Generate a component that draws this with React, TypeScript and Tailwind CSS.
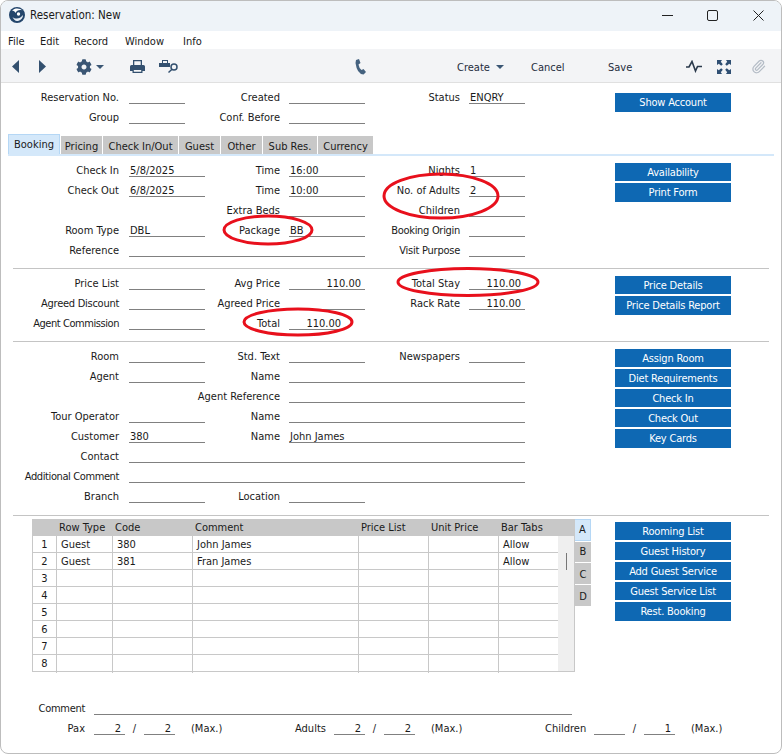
import type { ReactNode } from "react"
import { FaCog } from "react-icons/fa"
import { Paperclip } from "lucide-react"

const font = { fontFamily: '"DejaVu Sans Condensed", "DejaVu Sans", sans-serif' }

function F({ children, className = "", right }: { children?: ReactNode; className?: string; right?: boolean }) {
  return (
    <div className={`h-[17px] leading-[22px] border-b border-[#808080] whitespace-nowrap ${right ? "text-right pr-1" : "pl-px"} ${className}`}>
      {children}
    </div>
  )
}

// labels are right aligned and spill to the left when they are wider than their column
function L1({ children, className = "" }: { children?: ReactNode; className?: string }) {
  return <div className={`flex justify-end whitespace-nowrap leading-[22px] pr-2.5 ${className}`}>{children}</div>
}
function L2({ children, className = "" }: { children?: ReactNode; className?: string }) {
  return <div className={`flex justify-end whitespace-nowrap leading-[22px] pr-[9px] ${className}`}>{children}</div>
}

function Buttons({ items, className = "mt-[3px]" }: { items: string[]; className?: string }) {
  return (
    <div className={`w-[116px] flex flex-col gap-[2px] ${className}`}>
      {items.map((b) => (
        <div key={b} className="h-[18px] last:h-[19px] bg-[#0e68b3] text-white text-center leading-5 tracking-[-0.2px] whitespace-nowrap">
          {b}
        </div>
      ))}
    </div>
  )
}

function FormGrid({ children }: { children: ReactNode }) {
  return (
    <div className="w-[615px] shrink-0 grid grid-cols-[129px_76px_84px_76px_104px_56px] auto-rows-[20px] content-start">
      {children}
    </div>
  )
}

function Divider({ className = "" }: { className?: string }) {
  return <div className={`h-px bg-[#c4c4c4] mx-3 ${className}`} />
}

const tabs = [
  ["Pricing", "w-[41px]"],
  ["Check In/Out", "w-[75px]"],
  ["Guest", "w-[41px]"],
  ["Other", "w-[41px]"],
  ["Sub Res.", "w-[54px]"],
  ["Currency", "w-[55px]"],
]

const rows = [
  ["1", "Guest", "380", "John James", "Allow"],
  ["2", "Guest", "381", "Fran James", "Allow"],
  ["3", "", "", "", ""],
  ["4", "", "", "", ""],
  ["5", "", "", "", ""],
  ["6", "", "", "", ""],
  ["7", "", "", "", ""],
  ["8", "", "", "", ""],
]

function Logo() {
  return (
    <svg width="16" height="16" viewBox="0 0 16 16">
      <circle cx="8" cy="8" r="8" fill="#24466c" />
      <path d="M3 3.500 C6 0.500 11 1 13.500 3.500 C10.500 2.500 7.500 3.500 6.500 6 C6 4.500 4.500 3.800 3 3.500Z" fill="#fff" />
      <path d="M3.500 10 C6.500 12.500 11 12 14 8 C14 11.500 11 14 8 14 C6 14 4.500 12 3.500 10Z" fill="#e8eef5" />
      <circle cx="9.500" cy="7" r="1.700" fill="#fff" />
    </svg>
  )
}

function Caret() {
  return (
    <svg width="8" height="4" viewBox="0 0 8 4" className="shrink-0 fill-[#3b5674]">
      <path d="M0 0H8L4 4Z" />
    </svg>
  )
}

function Toolbar() {
  return (
    <div className="h-[34px] pt-0.5 bg-[#f3f4f6] border-b border-[#e0e0e0] flex items-center text-[#1f2d3d] shrink-0">
      <svg width="7" height="13" viewBox="0 0 7 13" className="ml-[11px] shrink-0 fill-[#33506f]"><path d="M7 0V13L0 6.500Z" /></svg>
      <svg width="7" height="13" viewBox="0 0 7 13" className="ml-[20px] shrink-0 fill-[#33506f]"><path d="M0 0V13L7 6.500Z" /></svg>
      <FaCog className="ml-[30px] shrink-0 text-[#3b5674]" size={16} />
      <div className="ml-1"><Caret /></div>
      <svg width="15" height="13" viewBox="0 0 15 13" className="ml-[26px] shrink-0 fill-[#33506f]">
        <path fillRule="evenodd" d="M3 0H12V5H13.500Q15 5 15 6.500V11H12.500V13H2.500V11H0V6.500Q0 5 1.500 5H3ZM4.300 1.300V5H10.700V1.300ZM3.800 10V11.700H11.200V10Z" />
      </svg>
      <svg width="20" height="15" viewBox="0 0 20 15" className="ml-[14px] shrink-0">
        <path fillRule="evenodd" d="M3 1H9V4H11V8H0V4H3ZM4 2V4H8V2Z" fill="#33506f" />
        <circle cx="15" cy="8" r="3" fill="none" stroke="#33506f" strokeWidth="1.500" />
        <path d="M13 10.200L9.500 13.500" stroke="#33506f" strokeWidth="1.500" />
      </svg>
      <svg width="11" height="16" viewBox="0 0 11 16" className="ml-[176px] shrink-0 fill-[#45627f]">
        <path d="M1 1L4 0L5.500 4L3.500 5.500Q4 9 6.500 11L8.500 10L11 13L8.500 15.500Q2 15 0.500 4Z" />
      </svg>
      <span className="ml-[91px] w-[39px] pt-1 shrink-0">Create</span>
      <Caret />
      <span className="ml-[27px] w-[77px] pt-1 shrink-0">Cancel</span>
      <span className="w-[78px] pt-1 shrink-0">Save</span>
      <svg width="16" height="13" viewBox="0 0 16 13" className="shrink-0">
        <path d="M0 7H3L6 1.500L9.500 11L11.500 6.500H16" fill="none" stroke="#2b3a4c" strokeWidth="1.600" />
      </svg>
      <svg width="14" height="14" viewBox="0 0 14 14" className="ml-[15px] shrink-0 fill-[#2f4f73]">
        <path d="M0 0H5L3.800 1.800L5.800 4.200L4.200 5.800L1.800 3.800L0 5Z" />
        <path d="M14 0H9L10.200 1.800L8.200 4.200L9.800 5.800L12.200 3.800L14 5Z" />
        <path d="M0 14H5L3.800 12.200L5.800 9.800L4.200 8.200L1.800 10.200L0 9Z" />
        <path d="M14 14H9L10.200 12.200L8.200 9.800L9.800 8.200L12.200 10.200L14 9Z" />
      </svg>
      <Paperclip className="ml-5 shrink-0 text-[#b4bcc6]" size={15} />
    </div>
  )
}

export default function App() {
  return (
    <div style={font} className="relative w-[782px] h-[754px] bg-white text-[11px] text-[#1a1a1a] overflow-hidden">
      <div className="w-full h-full flex flex-col border border-[#bdbdbd] rounded-lg overflow-hidden">
        {/* title bar */}
        <div className="h-[30px] bg-[#eef3f8] flex items-center shrink-0">
          <div className="ml-2 -mt-0.5 flex"><Logo /></div>
          <span className="ml-[5px] text-[11.5px]">Reservation: New</span>
          <svg width="11" height="11" viewBox="0 0 11 11" className="ml-auto -mt-0.5"><path d="M0 5.500H11" stroke="#222" strokeWidth="1" /></svg>
          <svg width="11" height="11" viewBox="0 0 11 11" className="ml-[34px] -mt-0.5"><rect x="0.500" y="0.500" width="10" height="10" rx="1.500" fill="none" stroke="#222" /></svg>
          <svg width="11" height="11" viewBox="0 0 11 11" className="ml-[35px] mr-[17px] -mt-0.5"><path d="M0.500 0.500L10.500 10.500M10.500 0.500L0.500 10.500" stroke="#222" /></svg>
        </div>
        {/* menu */}
        <div className="h-[18px] pt-1 flex items-center shrink-0 pl-[7px]">
          <span className="w-8">File</span>
          <span className="w-[34px]">Edit</span>
          <span className="w-[51px]">Record</span>
          <span className="w-[58px]">Window</span>
          <span>Info</span>
        </div>
        <Toolbar />

        <div className="flex-1 flex flex-col">
          <div className="flex mt-1 -ml-px">
            <FormGrid>
              <L1>Reservation No.</L1><F className="w-14" /><L2>Created</L2><F /><L2>Status</L2><F>ENQRY</F>
              <L1>Group</L1><F className="w-14" /><L2>Conf. Before</L2><F />
            </FormGrid>
            <Buttons items={["Show Account"]} className="mt-1.5" />
          </div>

          {/* tabs */}
          <div className="mt-[7px] h-[22px] mx-[7px] border-b-2 border-[#d4e8fa] flex items-end gap-px shrink-0">
            <div className="w-[52px] h-5 bg-[#d4e8fa] border border-[#b5d7f5] border-b-0 text-center leading-[19px]">Booking</div>
            {tabs.map(([t, w]) => (
              <div key={t} className={`${w} h-[18px] bg-[#c8c8c8] text-center leading-[22px] whitespace-nowrap`}>{t}</div>
            ))}
          </div>

          <div className="flex mt-1 -ml-px">
            <FormGrid>
              <L1>Check In</L1><F>5/8/2025</F><L2>Time</L2><F>16:00</F><L2>Nights</L2><F>1</F>
              <L1>Check Out</L1><F>6/8/2025</F><L2>Time</L2><F>10:00</F><L2>No. of Adults</L2><F>2</F>
              <L2 className="col-start-3">Extra Beds</L2><F /><L2>Children</L2><F />
              <L1>Room Type</L1><F>DBL</F><L2>Package</L2><F>BB</F><L2 className="tracking-[-0.3px]">Booking Origin</L2><F />
              <L1>Reference</L1><F className="col-span-3" /><L2 className="tracking-[-0.25px]">Visit Purpose</L2><F />
            </FormGrid>
            <Buttons items={["Availability", "Print Form"]} />
          </div>
          <Divider className="mt-2" />

          <div className="flex mt-1 -ml-px">
            <FormGrid>
              <L1>Price List</L1><F /><L2>Avg Price</L2><F right>110.00</F><L2>Total Stay</L2><F right>110.00</F>
              <L1 className="tracking-[-0.27px]">Agreed Discount</L1><F /><L2>Agreed Price</L2><F /><L2>Rack Rate</L2><F right>110.00</F>
              <L1 className="tracking-[-0.44px]">Agent Commission</L1><F /><L2>Total</L2><F right className="w-14">110.00</F>
            </FormGrid>
            <Buttons items={["Price Details", "Price Details Report"]} />
          </div>
          <Divider className="mt-2" />

          <div className="flex mt-1 -ml-px">
            <FormGrid>
              <L1>Room</L1><F /><L2>Std. Text</L2><F /><L2>Newspapers</L2><F />
              <L1>Agent</L1><F /><L2>Name</L2><F className="col-span-3" />
              <L2 className="col-start-3">Agent Reference</L2><F className="col-span-3" />
              <L1>Tour Operator</L1><F /><L2>Name</L2><F className="col-span-3" />
              <L1>Customer</L1><F>380</F><L2>Name</L2><F className="col-span-3">John James</F>
              <L1>Contact</L1><F className="col-span-5" />
              <L1 className="tracking-[-0.39px]">Additional Comment</L1><F className="col-span-5" />
              <L1>Branch</L1><F /><L2>Location</L2><F />
            </FormGrid>
            <Buttons items={["Assign Room", "Diet Requirements", "Check In", "Check Out", "Key Cards"]} />
          </div>
          <Divider className="mt-[9px]" />

          <div className="flex mt-[3px] -ml-px">
            <div className="w-[615px] shrink-0 flex pl-8">
              <div className="w-[543px] h-[153px] border-x border-[#c8c8c8] flex flex-col">
                <div className="h-[17px] bg-[#c8c8c8] grid grid-cols-[24px_56px_80px_166px_70px_70px_75px] leading-[17px] shrink-0">
                  <div />
                  <div className="pl-[2px]">Row Type</div>
                  <div className="pl-[2px]">Code</div>
                  <div className="pl-[2px]">Comment</div>
                  <div className="pl-[2px]">Price List</div>
                  <div className="pl-[2px]">Unit Price</div>
                  <div className="pl-[2px]">Bar Tabs</div>
                </div>
                <div className="flex flex-1">
                  <div className="flex-1">
                    {rows.map((r) => (
                      <div key={r[0]} className="h-[17px] grid grid-cols-[24px_56px_80px_166px_70px_70px_59px] leading-[18px] border-b border-[#c8c8c8] whitespace-nowrap">
                        <div className="text-center border-r border-[#c8c8c8]">{r[0]}</div>
                        <div className="pl-1 border-r border-[#c8c8c8]">{r[1]}</div>
                        <div className="pl-1 border-r border-[#c8c8c8]">{r[2]}</div>
                        <div className="pl-1 border-r border-[#c8c8c8]">{r[3]}</div>
                        <div className="border-r border-[#c8c8c8]" />
                        <div className="border-r border-[#c8c8c8]" />
                        <div className="pl-1">{r[4]}</div>
                      </div>
                    ))}
                  </div>
                  <div className="w-4 bg-[#efefef] border-b border-[#c8c8c8] flex justify-center pt-[17px] shrink-0">
                    <div className="w-px h-[17px] bg-[#777]" />
                  </div>
                </div>
              </div>
              <div className="w-4 flex flex-col gap-px shrink-0 text-center">
                <div className="h-[22px] bg-[#d4e8fa] border border-[#b5d7f5] border-l-0 leading-5">A</div>
                <div className="h-5 bg-[#c8c8c8] leading-5">B</div>
                <div className="h-[21px] bg-[#c8c8c8] leading-[23px]">C</div>
                <div className="h-[21px] bg-[#c8c8c8] leading-[23px]">D</div>
              </div>
            </div>
            <Buttons items={["Rooming List", "Guest History", "Add Guest Service", "Guest Service List", "Rest. Booking"]} />
          </div>

          <div className="mt-[26px] -ml-px flex h-5">
            <div className="w-[85px] text-right leading-[22px] tracking-[-0.3px]">Comment</div>
            <F className="ml-[9px] w-[478px]" />
          </div>
          <div className="-ml-px flex h-5 items-start leading-[22px]">
            <div className="w-[85px] text-right">Pax</div>
            <F right className="ml-[9px] w-[31px]">2</F>
            <span className="w-[19px] text-center">/</span>
            <F right className="w-[31px]">2</F>
            <span className="ml-4 w-[104px]">(Max.)</span>
            <div className="w-[30px] text-right">Adults</div>
            <F right className="ml-[9px] w-[31px]">2</F>
            <span className="w-[19px] text-center">/</span>
            <F right className="w-[31px]">2</F>
            <span className="ml-4 w-[114px]">(Max.)</span>
            <div className="w-[39px] text-right">Children</div>
            <F right className="ml-2.5 w-[31px]" />
            <span className="w-[19px] text-center">/</span>
            <F right className="w-[31px]">1</F>
            <span className="ml-4">(Max.)</span>
          </div>
        </div>
      </div>

      {/* red marker rings */}
      <svg width="782" height="754" viewBox="0 0 782 754" fill="none" stroke="#e8101c" strokeWidth="3" className="absolute inset-0 pointer-events-none">
        <ellipse cx="441" cy="196" rx="57" ry="22" />
        <ellipse cx="268" cy="230" rx="44" ry="14" />
        <ellipse cx="468" cy="282" rx="70" ry="13.500" />
        <ellipse cx="298" cy="322" rx="54" ry="13" />
      </svg>
    </div>
  )
}
